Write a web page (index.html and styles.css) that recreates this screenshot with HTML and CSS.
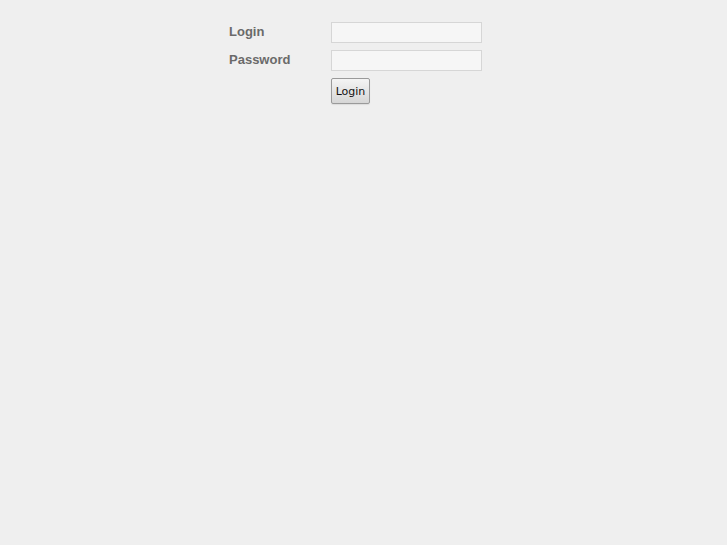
FILE: index.html
```html
<!DOCTYPE html>
<html>
<head>
<meta charset="utf-8">
<link rel="stylesheet" href="styles.css">
</head>
<body>
<form class="login-form">
  <div class="row">
    <label class="label" for="login">Login</label>
    <input class="field" id="login" type="text">
  </div>
  <div class="row">
    <label class="label" for="password">Password</label>
    <input class="field" id="password" type="password">
  </div>
  <div class="row">
    <span class="label"></span>
    <button class="btn" type="button">Login</button>
  </div>
</form>
</body>
</html>
```
FILE: styles.css
```css
html, body {
  margin: 0;
  padding: 0;
  background: #efefef;
  height: 100%;
}
.login-form {
  display: flex;
  flex-direction: column;
  gap: 7px;
  padding: 22px 0 0 229px;
}
.row {
  display: flex;
  align-items: center;
}
.label {
  width: 102px;
  font-family: "Liberation Sans", Arial, sans-serif;
  font-weight: bold;
  font-size: 13px;
  color: #6a6a6a;
  position: relative;
  top: -1px;
}
.field {
  box-sizing: border-box;
  width: 151px;
  height: 21px;
  margin: 0;
  border: 1px solid #d6d6d6;
  background: #f6f6f6;
  padding: 0 3px;
  outline: none;
}
.btn {
  box-sizing: border-box;
  width: 39px;
  height: 26px;
  margin: 0;
  padding: 0;
  border: 1px solid #9a9a9a;
  border-radius: 2px;
  background: linear-gradient(#f4f4f4, #d6d6d6);
  font-family: "DejaVu Sans", sans-serif;
  font-size: 11px;
  color: #111;
  box-shadow: 0 1px 1px rgba(0,0,0,0.08);
}
```
